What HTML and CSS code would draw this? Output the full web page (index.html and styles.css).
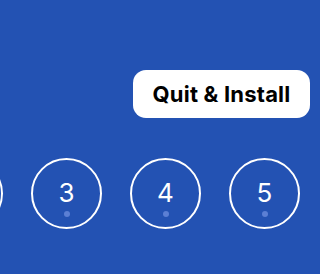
FILE: index.html
```html
<!DOCTYPE html>
<html>
<head>
<meta charset="utf-8">
<link rel="stylesheet" href="styles.css">
</head>
<body>
<div class="screen">
  <div class="actions">
    <button class="install">Quit &amp; Install</button>
  </div>
  <div class="steps">
    <div class="step"><span class="dot"></span></div>
    <div class="step"><span class="num">3</span><span class="dot"></span></div>
    <div class="step"><span class="num">4</span><span class="dot"></span></div>
    <div class="step"><span class="num">5</span><span class="dot"></span></div>
  </div>
</div>
</body>
</html>
```
FILE: styles.css
```css
html, body {
  margin: 0;
  padding: 0;
}
body {
  width: 320px;
  height: 274px;
  overflow: hidden;
  background: #2352b3;
  font-family: Inter, "Noto Sans", sans-serif;
}
.screen {
  display: flex;
  flex-direction: column;
  padding-top: 70px;
}
.actions {
  display: flex;
  justify-content: flex-end;
  padding-right: 10px;
}
.install {
  height: 48px;
  width: 177px;
  border: none;
  border-radius: 13px;
  background: #ffffff;
  color: #000000;
  font-family: Inter, "Noto Sans", sans-serif;
  font-weight: 700;
  font-size: 22px;
  letter-spacing: 0.2px;
  padding: 0;
}
.steps {
  display: flex;
  gap: 28px;
  margin-top: 40px;
  margin-left: -68px;
}
.step {
  flex: none;
  position: relative;
  width: 67px;
  height: 67px;
  border: 2px solid #ffffff;
  border-radius: 50%;
  display: flex;
  align-items: center;
  justify-content: center;
}
.num {
  color: #ffffff;
  font-size: 26px;
  font-weight: 400;
  line-height: 1;
  margin-top: -2px;
}
.dot {
  position: absolute;
  left: 50%;
  bottom: 10px;
  width: 6px;
  height: 6px;
  margin-left: -3px;
  border-radius: 50%;
  background: #5b7fd4;
}
```
